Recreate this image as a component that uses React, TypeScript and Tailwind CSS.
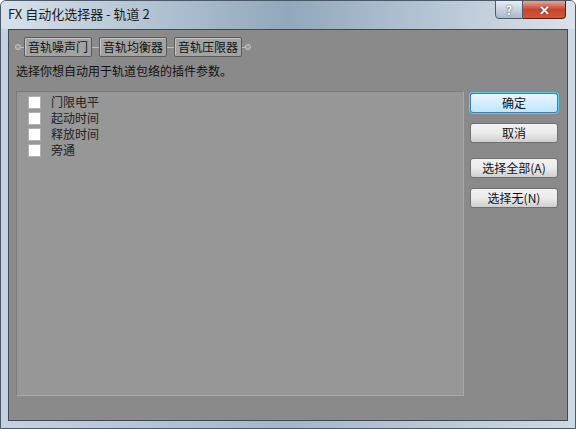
import React from "react";

const font = { fontFamily: '"Noto Sans CJK SC", "Liberation Sans", sans-serif' };

function Tab({ label }: { label: string }) {
  return (
    <div className="h-[20px] px-[3px] border border-[#5a5a5a] bg-[#a3a3a3] rounded-[2px] flex items-center text-[12px] leading-none text-[#111] shadow-[inset_1px_1px_0_#c4c4c4]">
      {label}
    </div>
  );
}

function Btn({ label, primary }: { label: string; primary?: boolean }) {
  return (
    <div
      className={
        "w-[88px] h-[20px] rounded-[3px] flex items-center justify-center text-[12px] leading-none text-[#111] border " +
        (primary
          ? "border-[#3c7fb1] bg-gradient-to-b from-[#eaf6fd] to-[#bee6fd] shadow-[0_0_0_1px_#5ac8f0]"
          : "border-[#707070] bg-gradient-to-b from-[#f2f2f2] via-[#ebebeb] to-[#cfcfcf]")
      }
    >
      {label}
    </div>
  );
}

function Check({ label }: { label: string }) {
  return (
    <div className="flex items-center h-[16px]">
      <div className="w-[13px] h-[13px] bg-white border border-[#b0b0b0] ml-[11px]" />
      <span className="ml-[10px] text-[12px] leading-none text-[#222]">{label}</span>
    </div>
  );
}

export default function App() {
  return (
    <div style={font} className="w-[576px] h-[429px] bg-gradient-to-r from-[#c4d3e2] via-[#a3b6c9] to-[#cfd9e3] flex flex-col rounded-t-[6px] border border-[#4b5867] overflow-hidden relative">
      {/* title bar */}
      <div className="h-[28px] flex items-start relative">
        <div className="absolute inset-0 bg-gradient-to-r from-[#dbe5ee] via-[#8ea4ba] to-[#dde5ec] opacity-80" />
        <div className="relative mt-[6px] ml-[7px] text-[13px] leading-none text-[#1a1a1a]">FX 自动化选择器 - 轨道 2</div>
        <div className="absolute top-[-1px] right-[9px] flex">
          <div className="w-[28px] h-[19px] border border-[#4d5c6c] rounded-bl-[4px] bg-gradient-to-b from-[#e6edf3] to-[#a9b9c9] flex items-center justify-center text-[12px] font-bold text-white [text-shadow:0_0_2px_#333]">?</div>
          <div className="w-[43px] h-[19px] border border-[#5a1d12] border-l-0 rounded-br-[4px] bg-gradient-to-b from-[#e8a596] via-[#c6452c] to-[#d7553a] flex items-center justify-center text-[13px] font-bold text-white [text-shadow:0_0_2px_#4a1a10]">✕</div>
        </div>
      </div>
      {/* client */}
      <div className="flex-1 mx-[7px] mb-[7px] bg-[#8a8a8a] border border-[#3f4a55] flex flex-col">
        <div className="flex items-center mt-[7px] ml-[6px] h-[20px]">
          <div className="w-[6px] h-[6px] rounded-full border border-[#c9c9c9] bg-[#9a9a9a]" />
          <div className="w-[3px] h-px bg-[#c0c0c0]" />
          <Tab label="音轨噪声门" />
          <div className="w-[7px] h-px bg-[#c0c0c0]" />
          <Tab label="音轨均衡器" />
          <div className="w-[7px] h-px bg-[#c0c0c0]" />
          <Tab label="音轨压限器" />
          <div className="w-[3px] h-px bg-[#c0c0c0]" />
          <div className="w-[6px] h-[6px] rounded-full border border-[#c9c9c9] bg-[#9a9a9a]" />
        </div>
        <div className="mt-[8px] ml-[7px] text-[12px] leading-none text-[#111]">选择你想自动用于轨道包络的插件参数。</div>
        <div className="flex mt-[14px] ml-[7px]">
          <div className="w-[448px] h-[305px] bg-[#979797] border border-[#7b7b7b] border-r-[#a8a8a8] border-b-[#a8a8a8] pt-[2px] flex flex-col">
            <Check label="门限电平" />
            <Check label="起动时间" />
            <Check label="释放时间" />
            <Check label="旁通" />
          </div>
          <div className="ml-[6px] mt-[2px] flex flex-col">
            <Btn label="确定" primary />
            <div className="h-[10px]" />
            <Btn label="取消" />
            <div className="h-[15px]" />
            <Btn label="选择全部(A)" />
            <div className="h-[10px]" />
            <Btn label="选择无(N)" />
          </div>
        </div>
      </div>
    </div>
  );
}
